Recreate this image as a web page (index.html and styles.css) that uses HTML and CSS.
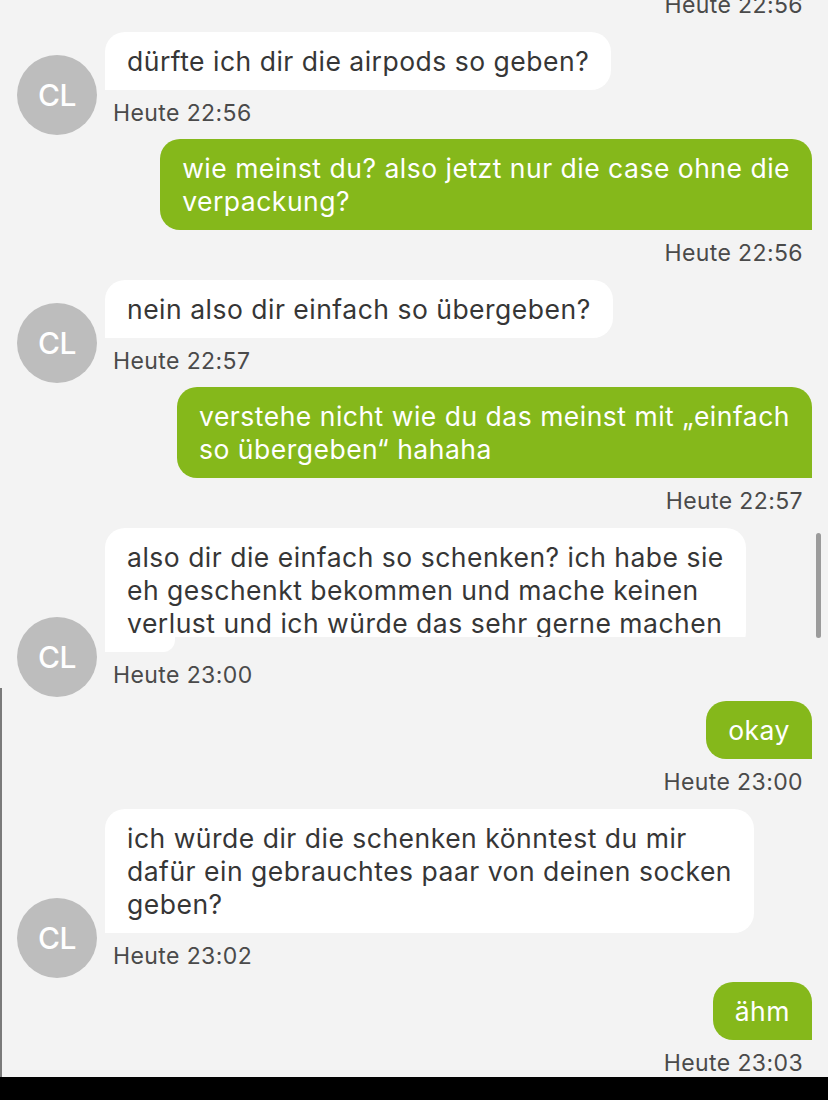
FILE: index.html
```html
<!DOCTYPE html>
<html lang="de">
<head>
<meta charset="utf-8">
<title>Chat</title>
<link rel="stylesheet" href="styles.css">
</head>
<body>
<div class="screen">
  <div class="chat">
    <div class="time time-top">Heute 22:56</div>

    <div class="msg in">
      <div class="avatar">CL</div>
      <div class="stack">
        <div class="bubble">dürfte ich dir die airpods so geben?</div>
        <div class="time">Heute 22:56</div>
      </div>
    </div>

    <div class="msg out">
      <div class="bubble">wie meinst du? also jetzt nur die case ohne die<br>verpackung?</div>
      <div class="time">Heute 22:56</div>
    </div>

    <div class="msg in">
      <div class="avatar">CL</div>
      <div class="stack">
        <div class="bubble">nein also dir einfach so übergeben?</div>
        <div class="time">Heute 22:57</div>
      </div>
    </div>

    <div class="msg out">
      <div class="bubble">verstehe nicht wie du das meinst mit „einfach<br>so übergeben“ hahaha</div>
      <div class="time">Heute 22:57</div>
    </div>

    <div class="msg in">
      <div class="avatar">CL</div>
      <div class="stack">
        <div class="bubble clipped">also dir die einfach so schenken? ich habe sie<br>eh geschenkt bekommen und mache keinen<br>verlust und ich würde das sehr gerne machen</div>
        <div class="time">Heute 23:00</div>
      </div>
    </div>

    <div class="msg out">
      <div class="bubble">okay</div>
      <div class="time">Heute 23:00</div>
    </div>

    <div class="msg in">
      <div class="avatar">CL</div>
      <div class="stack">
        <div class="bubble">ich würde dir die schenken könntest du mir<br>dafür ein gebrauchtes paar von deinen socken<br>geben?</div>
        <div class="time">Heute 23:02</div>
      </div>
    </div>

    <div class="msg out">
      <div class="bubble">ähm</div>
      <div class="time">Heute 23:03</div>
    </div>
  </div>
  <div class="bottom-bar"></div>
  <div class="scrollbar"></div>
  <div class="edge-line"></div>
</div>
</body>
</html>
```

FILE: styles.css
```css
html, body {
  margin: 0;
  padding: 0;
}

body {
  background: #f3f3f3;
  font-family: Inter, "Liberation Sans", Arial, sans-serif;
}

.screen {
  position: relative;
  height: 1100px;
  display: flex;
  flex-direction: column;
  overflow: hidden;
}

.chat {
  flex: 1;
  overflow: hidden;
  padding: 0 16px 0 17px;
}

.bottom-bar {
  height: 23px;
  background: #000;
  flex-shrink: 0;
}

.time {
  font-size: 23px;
  letter-spacing: 0.4px;
  line-height: 30px;
  color: #4a4a4a;
  white-space: nowrap;
}

.time-top {
  text-align: right;
  padding-right: 9px;
  margin-top: -10px;
  margin-bottom: 12px;
}

.msg.in {
  display: flex;
  align-items: flex-end;
  gap: 8px;
  margin-bottom: 4px;
}

.msg.out {
  display: flex;
  flex-direction: column;
  align-items: flex-end;
  margin-bottom: 12px;
}

.avatar {
  width: 80px;
  height: 80px;
  border-radius: 50%;
  background: #bdbdbd;
  color: #fff;
  font-size: 30px;
  font-weight: 500;
  display: flex;
  align-items: center;
  justify-content: center;
  flex-shrink: 0;
  letter-spacing: -0.5px;
}

.stack {
  display: flex;
  flex-direction: column;
  align-items: flex-start;
  padding-bottom: 7px;
}

.bubble {
  font-size: 26.5px;
  letter-spacing: 0.5px;
  line-height: 33px;
  padding: 12.5px 22px;
  border-radius: 20px;
  white-space: nowrap;
}

.in .bubble {
  background: #fff;
  color: #363636;
  border-bottom-left-radius: 0;
}

.out .bubble {
  background: #85b81b;
  color: #fff;
  border-bottom-right-radius: 0;
}

.stack .time {
  margin-top: 8px;
  padding-left: 8px;
}

.out .time {
  margin-top: 8px;
  padding-right: 9px;
}

/* rendering glitch: bottom strip of the bubble hidden except a small stub */
.bubble.clipped {
  position: relative;
}

.bubble.clipped::after {
  content: "";
  position: absolute;
  left: 0;
  right: 0;
  bottom: 0;
  height: 15px;
  background: #f3f3f3;
  z-index: 1;
}

.bubble.clipped::before {
  content: "";
  position: absolute;
  left: 0;
  bottom: 0;
  width: 70px;
  height: 15px;
  background: #fff;
  border-bottom-right-radius: 12px;
  z-index: 2;
}

.scrollbar {
  position: absolute;
  left: 816px;
  top: 533px;
  width: 5px;
  height: 105px;
  border-radius: 3px;
  background: #9b9b9b;
}

.edge-line {
  position: absolute;
  left: 0;
  top: 688px;
  width: 2px;
  height: 389px;
  background: #7a7a7a;
}
```
